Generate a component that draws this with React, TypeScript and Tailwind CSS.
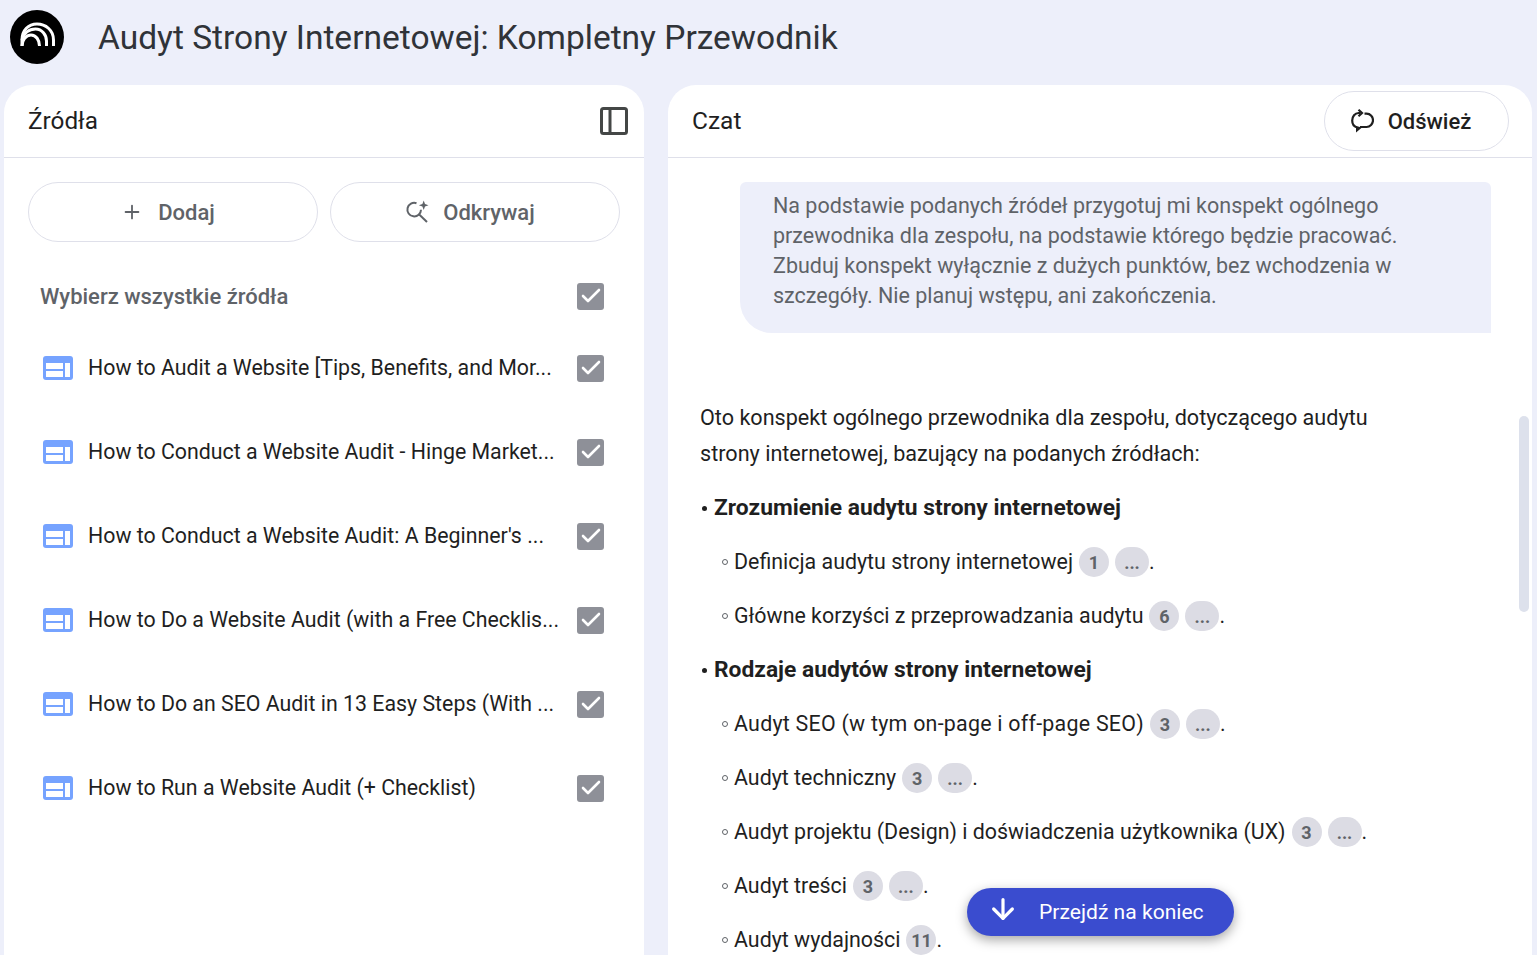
import React from 'react';
import { Plus, ArrowDown, Check } from 'lucide-react';

const sources = [
  'How to Audit a Website [Tips, Benefits, and Mor...',
  'How to Conduct a Website Audit - Hinge Market...',
  "How to Conduct a Website Audit: A Beginner's ...",
  'How to Do a Website Audit (with a Free Checklis...',
  'How to Do an SEO Audit in 13 Easy Steps (With ...',
  'How to Run a Website Audit (+ Checklist)',
];

function Logo() {
  return (
    <svg width="54" height="54" viewBox="0 0 54 54" className="shrink-0">
      <circle cx="27" cy="27" r="27" fill="#000" />
      <g fill="none" stroke="#fff" strokeWidth="3">
        <path d="M12 36v-6c0-10 6.500-16 15-16s16.500 6 16.500 16v6" />
        <path d="M12 30c1.500-7 7-11 13.500-11 6.500 0 11 6 11 12v5" />
        <path d="M12 36c0-6 4-11 9-11s8.500 5 8.500 11" />
      </g>
    </svg>
  );
}

function PanelToggle() {
  return (
    <svg width="28" height="28" viewBox="0 0 28 28" fill="none" stroke="#444746" strokeWidth="3">
      <rect x="1.500" y="1.500" width="25" height="25" rx="2" />
      <path d="M10 1.500v25" />
    </svg>
  );
}

function DiscoverIcon() {
  return (
    <svg width="24" height="24" viewBox="0 0 24 24" fill="none" stroke="#5f6368" strokeWidth="2">
      <path d="M11.500 3.200a6.800 6.800 0 1 0 4.500 6.500" />
      <path d="M14.200 14.500l7.800 7.500" />
      <path d="M18.700 .5l1.300 3.500 3.500 1.300-3.500 1.300-1.300 3.500-1.300-3.500-3.500-1.300 3.500-1.300z" fill="#5f6368" stroke="none" />
    </svg>
  );
}

function RefreshIcon() {
  return (
    <svg width="24" height="24" viewBox="0 0 24 24" fill="none" stroke="#1f1f1f" strokeWidth="2.200">
      <path d="M10.500 4H8.500C5 4 2.200 7.500 2.200 11.500c0 3.500 2 6 4.800 7" />
      <path d="M8.500 .8L12 4 8.500 7.200" />
      <path d="M14.500 4.700h2C20.500 4.700 23 7.800 23 11.300c0 3.700-3 6.700-6.500 6.700H10" />
      <path d="M6 17v6.500l6-5z" fill="#1f1f1f" stroke="none" />
    </svg>
  );
}

function WebIcon() {
  return (
    <svg width="30" height="24" viewBox="0 0 30 24" className="shrink-0">
      <rect x="0" y="0" width="30" height="24" rx="3" fill="#76a3ff" />
      <rect x="3" y="7" width="17" height="6" fill="#fff" />
      <rect x="3" y="15" width="17" height="6" fill="#fff" />
      <rect x="22" y="7" width="5" height="14" fill="#fff" />
    </svg>
  );
}

function Tick() {
  return (
    <span className="flex h-[27px] w-[27px] shrink-0 items-center justify-center rounded-[3px] bg-[#8e9098]">
      <Check className="h-[24px] w-[24px] text-white" strokeWidth={2.6} />
    </span>
  );
}

function Chip({ children, wide }: { children: React.ReactNode; wide?: boolean }) {
  return (
    <span
      className={`ml-[6px] inline-flex h-[30px] items-center justify-center rounded-full bg-[#dcdce4] text-[18px] font-bold text-[#5f6368] ${
        wide ? 'w-[34px]' : 'min-w-[30px]'
      }`}
    >
      {children}
    </span>
  );
}

function SubItem({ text, num, textClass }: { text: string; num: string; textClass?: string }) {
  return (
    <div className="flex h-[54px] items-center pl-[22px] text-[21.4px]">
      <span className="mr-[6px] h-[6px] w-[6px] rounded-full border border-[#5f6368]" />
      <span className={textClass}>{text}</span>
      <Chip>{num}</Chip>
      {num !== '11' && <Chip wide>...</Chip>}
      <span>.</span>
    </div>
  );
}

function Heading({ text }: { text: string }) {
  return (
    <div className="flex h-[54px] items-center text-[22.8px] font-bold text-[#1f1f1f]">
      <span className="mx-[2px] mr-[7px] h-[5px] w-[5px] rounded-full bg-[#1f1f1f]" />
      <span>{text}</span>
    </div>
  );
}

export default function App() {
  return (
    <div className="flex h-[955px] flex-col overflow-hidden bg-[#edeffa] font-['Roboto',sans-serif] text-[22px] text-[#1f1f1f]">
      <header className="flex h-[85px] shrink-0 items-center pb-[11px] pl-[10px]">
        <Logo />
        <h1 className="ml-[34px] mt-[2px] text-[33.5px] font-normal text-[#303338]">Audyt Strony Internetowej: Kompletny Przewodnik</h1>
      </header>

      <div className="flex min-h-0 flex-1 gap-[24px] pl-[4px] pr-[5px]">
        <section className="flex w-[640px] shrink-0 flex-col rounded-t-[28px] bg-white">
          <div className="flex h-[73px] shrink-0 items-center justify-between border-b border-[#dfe0ea] pl-[24px] pr-[16px]">
            <span className="text-[24.3px]">Źródła</span>
            <PanelToggle />
          </div>
          <div className="flex gap-[12px] px-[24px] pt-[24px]">
            <button className="flex h-[60px] flex-1 items-center justify-center gap-[15px] rounded-full border border-[#dfe0ea] pr-[10px] font-medium text-[#5f6368]">
              <Plus className="h-[22px] w-[22px]" strokeWidth={2} />
              <span>Dodaj</span>
            </button>
            <button className="flex h-[60px] flex-1 items-center justify-center gap-[14px] rounded-full border border-[#dfe0ea] pr-[10px] font-medium text-[#5f6368]">
              <DiscoverIcon />
              <span>Odkrywaj</span>
            </button>
          </div>
          <div className="mt-[24px] flex h-[60px] shrink-0 items-center justify-between pl-[36px] pr-[40px] font-medium text-[#5f6368]">
            <span>Wybierz wszystkie źródła</span>
            <Tick />
          </div>
          <div className="flex flex-col text-[21.33px]">
            {sources.map((s) => (
              <div key={s} className="flex h-[84px] items-center justify-between pl-[39px] pr-[40px]">
                <WebIcon />
                <span className="ml-[15px] min-w-0 flex-1 whitespace-nowrap">{s}</span>
                <Tick />
              </div>
            ))}
          </div>
        </section>

        <section className="relative flex min-w-0 flex-1 flex-col overflow-hidden rounded-t-[28px] bg-white">
          <div className="flex h-[73px] shrink-0 items-center justify-between border-b border-[#dfe0ea] pl-[24px] pr-[23px]">
            <span className="text-[24.5px]">Czat</span>
            <button className="flex h-[60px] w-[185px] items-center justify-center gap-[14px] rounded-full border border-[#dfe0ea] pr-[12px] font-medium">
              <RefreshIcon />
              <span>Odśwież</span>
            </button>
          </div>
          <div className="min-h-0 flex-1 overflow-hidden pt-[24px] text-[21.6px]">
            <div className="ml-[72px] mr-[41px] rounded-t-[6px] rounded-bl-[32px] bg-[#edeffa] px-[33px] pb-[22px] pt-[9px] text-[21.5px] leading-[30px] text-[#5f6368]">
              Na podstawie podanych źródeł przygotuj mi konspekt ogólnego przewodnika dla zespołu, na podstawie którego będzie pracować. Zbuduj konspekt wyłącznie z dużych punktów, bez wchodzenia w szczegóły. Nie planuj wstępu, ani zakończenia.
            </div>
            <div className="mt-[67px] pl-[32px] pr-[150px]">
              <p className="mb-[9px] leading-[36px]">
                Oto konspekt ogólnego przewodnika dla zespołu, dotyczącego audytu strony internetowej, bazujący na podanych źródłach:
              </p>
              <Heading text="Zrozumienie audytu strony internetowej" />
              <SubItem text="Definicja audytu strony internetowej" num="1" />
              <SubItem text="Główne korzyści z przeprowadzania audytu" num="6" />
              <Heading text="Rodzaje audytów strony internetowej" />
              <SubItem text="Audyt SEO (w tym on-page i off-page SEO)" num="3" textClass="tracking-[0.25px]" />
              <SubItem text="Audyt techniczny" num="3" />
              <SubItem text="Audyt projektu (Design) i doświadczenia użytkownika (UX)" num="3" />
              <SubItem text="Audyt treści" num="3" />
              <SubItem text="Audyt wydajności" num="11" />
            </div>
          </div>
          <div className="absolute right-[3px] top-[331px] h-[196px] w-[10px] rounded-full bg-[#dde1ec]" />
          <button className="absolute left-[299px] top-[803px] flex h-[48px] w-[267px] items-center rounded-full bg-[#3a4ccf] pl-[20px] text-[21.1px] text-white shadow-[0_4px_12px_rgba(0,0,0,0.35)]">
            <ArrowDown className="mb-[6px] h-[32px] w-[32px]" strokeWidth={2.4} />
            <span className="ml-[20px]">Przejdź na koniec</span>
          </button>
        </section>
      </div>
    </div>
  );
}
